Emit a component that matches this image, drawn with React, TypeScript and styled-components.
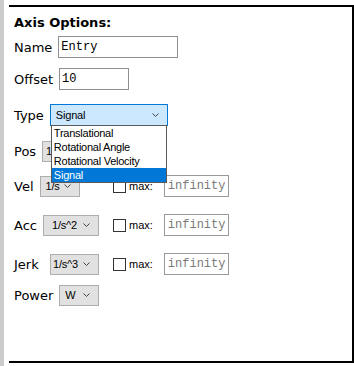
import React from 'react';
import styled, { createGlobalStyle } from 'styled-components';

const GlobalStyle = createGlobalStyle`
  html, body {
    margin: 0;
    padding: 0;
    background: #fff;
  }
  body {
    font-family: 'DejaVu Sans', Verdana, sans-serif;
    color: #000;
  }
`;

const typeOptions = ['Translational', 'Rotational Angle', 'Rotational Velocity', 'Signal'];

const limitRows = [
  { label: 'Vel', unit: '1/s', w: 40, pl: 5, mt: 11 },
  { label: 'Acc', unit: '1/s^2', w: 56, pl: 8, mt: 15 },
  { label: 'Jerk', unit: '1/s^3', w: 49, pl: 2, mt: 15, lw: 30 },
];

const Chevron = () => (
  <ChevronSvg width="7" height="4" viewBox="0 0 7 4">
    <polyline points="0.5,0.5 3.5,3.5 6.5,0.5" fill="none" stroke="#444" strokeWidth="1" />
  </ChevronSvg>
);

export default function App() {
  return (
    <>
      <GlobalStyle />
      <Page>
        <Strip />
        <Panel>
          <Heading>Axis Options:</Heading>
          <Row $mt={4}>
            <Label>Name</Label>
            <TextInput $w={120} defaultValue="Entry" />
          </Row>
          <Row $mt={8}>
            <Label>Offset</Label>
            <TextInput $w={70} defaultValue="10" />
          </Row>
          <Row $mt={12}>
            <Label>Type</Label>
            <SelectBox $w={118} $h={22} $pl={5} $focus>
              Signal
              <Chevron />
              <Options>
                {typeOptions.map((opt) => (
                  <Option key={opt} $active={opt === 'Signal'}>
                    {opt}
                  </Option>
                ))}
              </Options>
            </SelectBox>
          </Row>
          <Row $mt={12}>
            <Label>Pos</Label>
            <SelectBox $w={56} $pl={3}>
              1
              <Chevron />
            </SelectBox>
          </Row>
          {limitRows.map(({ label, unit, w, pl, mt, lw }) => (
            <Row key={label} $mt={mt}>
              <Lead>
                <Label $w={lw}>{label}</Label>
                <SelectBox $w={w} $pl={pl}>
                  {unit}
                  <Chevron />
                </SelectBox>
              </Lead>
              <Checkbox />
              <MaxLabel>max:</MaxLabel>
              <LimitInput placeholder="infinity" />
            </Row>
          ))}
          <Row $mt={7}>
            <Label>Power</Label>
            <SelectBox $w={40} $pl={5}>
              W
              <Chevron />
            </SelectBox>
          </Row>
        </Panel>
      </Page>
    </>
  );
}

const Page = styled.div`
  display: flex;
  height: 366px;
  overflow: hidden;
`;

const Strip = styled.div`
  width: 4px;
  flex-shrink: 0;
  background: #cbcbcb;
`;

const Panel = styled.div`
  margin: 5px 0 0 5px;
  width: 345px;
  height: 358px;
  box-sizing: border-box;
  border-top: 2px solid #000;
  border-right: 2px solid #000;
  border-bottom: 2px solid #000;
  padding-left: 5px;
`;

const Heading = styled.div`
  margin-top: 8px;
  font-size: 13px;
  line-height: 16px;
  font-weight: bold;
`;

const Row = styled.div<{ $mt: number }>`
  display: flex;
  align-items: center;
  gap: 6px;
  height: 24px;
  margin-top: ${(p) => p.$mt}px;
  font-size: 13px;
`;

const Lead = styled.div`
  display: flex;
  align-items: center;
  gap: 6px;
  width: 93px;
  flex-shrink: 0;
`;

const Label = styled.span<{ $w?: number }>`
  min-width: ${(p) => (p.$w ? `${p.$w}px` : 'auto')};
  font-size: 13px;
`;

const TextInput = styled.input<{ $w: number }>`
  width: ${(p) => p.$w}px;
  height: 22px;
  box-sizing: border-box;
  margin: 0;
  padding: 0 2px;
  border: 1px solid #8f8f8f;
  border-radius: 0;
  outline: none;
  font-family: 'Liberation Mono', 'Courier New', monospace;
  font-size: 12px;
  color: #000;
`;

const SelectBox = styled.div<{ $w: number; $h?: number; $pl: number; $focus?: boolean }>`
  position: relative;
  display: flex;
  align-items: center;
  width: ${(p) => p.$w}px;
  height: ${(p) => p.$h ?? 21}px;
  box-sizing: border-box;
  padding-left: ${(p) => p.$pl}px;
  border: 1px solid ${(p) => (p.$focus ? '#0078d7' : '#adadad')};
  background: ${(p) => (p.$focus ? '#cce8ff' : '#e1e1e1')};
  font-family: 'Liberation Sans', Arial, sans-serif;
  font-size: 11px;
  letter-spacing: -0.2px;
  color: #000;
`;

const ChevronSvg = styled.svg`
  margin-left: auto;
  margin-right: 8px;
  flex-shrink: 0;
`;

const Options = styled.div`
  position: absolute;
  top: 100%;
  left: 0;
  width: 116px;
  box-sizing: border-box;
  border: 1px solid #5a5a5a;
  background: #fff;
  z-index: 2;
`;

const Option = styled.div<{ $active?: boolean }>`
  height: 14px;
  line-height: 14px;
  padding-left: 2px;
  font-size: 11px;
  letter-spacing: -0.25px;
  white-space: nowrap;
  background: ${(p) => (p.$active ? '#0078d7' : '#fff')};
  color: ${(p) => (p.$active ? '#fff' : '#000')};
`;

const Checkbox = styled.span`
  width: 13px;
  height: 13px;
  box-sizing: border-box;
  flex-shrink: 0;
  border: 1px solid #333;
  background: #fff;
`;

const MaxLabel = styled.span`
  margin-left: -3px;
  font-family: 'Liberation Sans', Arial, sans-serif;
  font-size: 11px;
`;

const LimitInput = styled.input`
  width: 65px;
  height: 22px;
  box-sizing: border-box;
  margin: 0 0 0 5px;
  padding: 0 3px;
  border: 1px solid #999;
  border-radius: 0;
  outline: none;
  font-family: 'Liberation Mono', 'Courier New', monospace;
  font-size: 12px;
  &::placeholder {
    color: #7a7a7a;
  }
`;
